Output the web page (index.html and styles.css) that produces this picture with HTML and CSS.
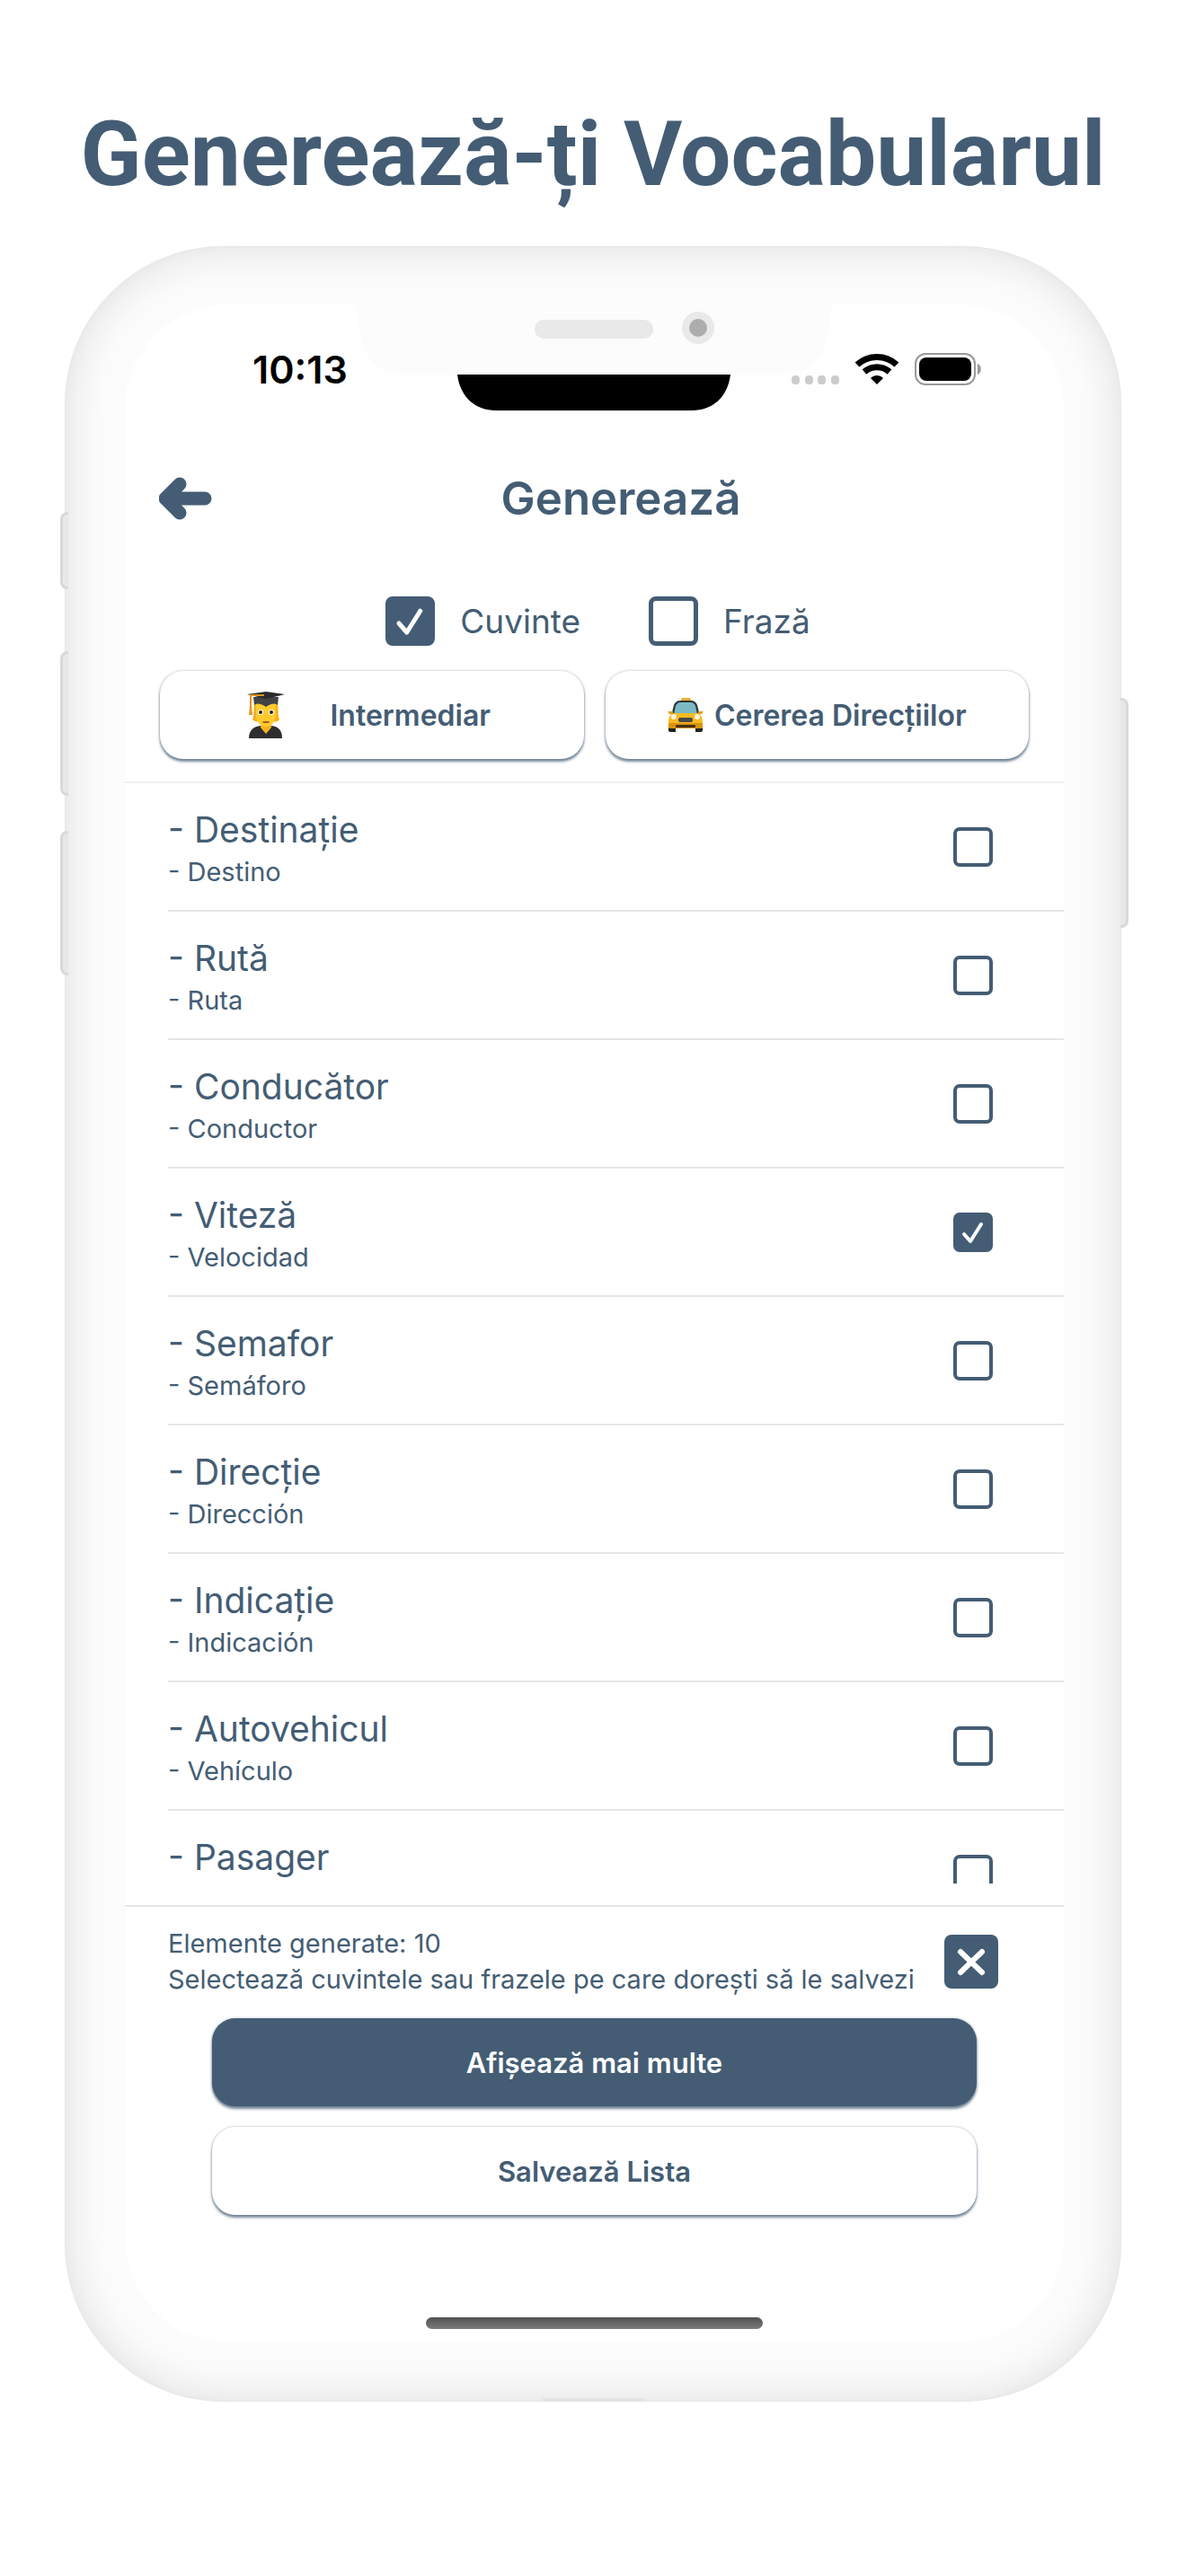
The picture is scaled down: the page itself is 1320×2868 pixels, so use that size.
FILE: index.html
```
<!DOCTYPE html>
<html lang="ro">
  <head>
    <meta charset="UTF-8" />
    <meta name="viewport" content="width=device-width, initial-scale=1.0" />
    <link rel="stylesheet" href="styles.css">
    <title>Generează-ți Vocabularul</title>
  </head>
  <body>
    <h1 class="headline">Generează-ți Vocabularul</h1>

    <div class="phone">
      <!-- side buttons -->
      <span class="key key-mute"></span>
      <span class="key key-up"></span>
      <span class="key key-down"></span>
      <span class="key key-power"></span>

      <main class="screen">
        <!-- notch, speaker and camera -->
        <svg class="notch" width="538" height="119" viewBox="0 0 538 119" aria-hidden="true">
          <path fill="#000" d="M117 78C120 103 137 118 160 118H378C401 118 418 103 421 78Z" />
          <path fill="#fcfcfc" d="M0 0C4 1 5 4 6 12C8 54 23 78 62 78H476C515 78 530 54 532 12C533 4 534 1 538 0Z" />
          <rect x="203" y="17" width="132" height="21" rx="10" fill="#e9e9e9" />
          <circle cx="385" cy="26" r="18" fill="#e9e9e9" />
          <circle cx="385" cy="26" r="10" fill="#adadad" />
        </svg>

        <div class="status">
          <span class="time">10:13</span>
          <svg width="212" height="38" viewBox="0 0 212 38" aria-hidden="true">
            <g fill="#ccc">
              <rect x="0" y="26" width="9" height="10" rx="4" />
              <rect x="15" y="26" width="9" height="10" rx="4" />
              <rect x="29" y="26" width="9" height="10" rx="4" />
              <rect x="44" y="26" width="9" height="10" rx="4" />
            </g>
            <g fill="none" stroke="#000" stroke-width="7">
              <path d="M73 14C85 2.500 105 2.500 117 14" />
              <path d="M81 22C89 15 101 15 109 22" />
            </g>
            <path d="M88 29C92 25 98 25 102 29L95 36Z" />
            <rect x="138" y="2" width="66" height="34" rx="11" fill="none" stroke="#999" stroke-width="2" />
            <rect x="142" y="6" width="58" height="26" rx="8" />
            <path fill="#999" d="M207 13C212 14 212 24 207 25Z" />
          </svg>
        </div>

        <header class="topbar">
          <button class="back" type="button" aria-label="Înapoi">
            <svg width="60" height="48" viewBox="0 0 60 48">
              <path fill="none" stroke="#445d74" stroke-width="15" stroke-linecap="round" stroke-linejoin="round" d="M23 8L7 24L23 40M9 24H51" />
              <path fill="#445d74" d="M7 24L23 8V40Z" />
            </svg>
          </button>
          <h2>Generează</h2>
        </header>

        <div class="kinds">
          <label><input type="checkbox" class="check big" checked /> Cuvinte</label>
          <label><input type="checkbox" class="check big" /> Frază</label>
        </div>

        <div class="filters">
          <button class="btn level" type="button">
            <svg width="42" height="52" viewBox="0 0 42 52" aria-hidden="true">
              <path fill="#f2b11e" d="M8 12H34C35 20 34 27 36 31C34 34 31 34 28 33H13C10 34 8 33 6 31C8 26 7 20 8 12Z" />
              <path fill="#2e2e30" d="M2 52C2 43 7 39 15 38H27C35 39 39 43 39 52Z" />
              <path fill="#f4b41f" d="M15 34H27V40L21 47L15 40Z" />
              <path fill="#ffcb2e" d="M10 14H32V26C32 34 26 39 21 39C16 39 10 34 10 26Z" />
              <path fill="#424245" d="M7 6H35L34 15C30 12 26 14 21 17C16 14 12 12 8 15Z" />
              <path fill="#2a2a2c" d="M0 3L21 0L42 3C36 5 28 6 21 8C14 6 6 5 0 3Z" />
              <path fill="none" stroke="#d99022" stroke-width="2" d="M19 4L4 4V18" />
              <path fill="#e39a2a" d="M3 15H5L6 26H2Z" />
              <circle cx="15" cy="23" r="3" fill="#fff" />
              <circle cx="27" cy="23" r="3" fill="#fff" />
              <circle cx="15" cy="23" r="2" fill="#2d2013" />
              <circle cx="27" cy="23" r="2" fill="#2d2013" />
              <ellipse cx="21" cy="34" rx="4" ry="1" fill="#a5542a" />
            </svg>
            Intermediar
          </button>
          <button class="btn topic" type="button">
            <svg width="40" height="38" viewBox="0 0 40 38" aria-hidden="true">
              <rect x="15" y="0" width="11" height="5" rx="2" fill="#e7ae35" />
              <path fill="#222" d="M1 31H9V38H3Q1 38 1 36ZM31 31H39V36Q39 38 37 38H31Z" />
              <path fill="#2f3638" d="M4 20L7 8Q9 3 14 3H26Q31 3 33 8L36 20Z" />
              <path fill="#7bbac4" d="M7 18L9 9Q11 5 14 5H26Q29 5 31 9L33 18Z" />
              <path fill="#f6bb22" d="M6 17H34Q39 20 39 26V32Q39 34 37 34H3Q1 34 1 32V26Q1 20 6 17Z" />
              <path fill="#d9930f" d="M1 28H39V32Q39 34 37 34H3Q1 34 1 32Z" />
              <path fill="#e3a21a" d="M0 15H6V18H2ZM40 15H34V18H38Z" />
              <circle cx="7" cy="21" r="3" fill="#fff3dc" />
              <circle cx="33" cy="21" r="3" fill="#fff3dc" />
              <rect x="12" y="22" width="16" height="5" rx="2" fill="#4a4a48" />
              <rect x="9" y="30" width="22" height="3" rx="1" fill="#44300c" />
            </svg>
            Cererea Direcțiilor
          </button>
        </div>

        <ul class="words">
          <li>
            <label for="w1"><b>- Destinație</b><small>- Destino</small></label>
            <input type="checkbox" class="check" id="w1" />
          </li>
          <li>
            <label for="w2"><b>- Rută</b><small>- Ruta</small></label>
            <input type="checkbox" class="check" id="w2" />
          </li>
          <li>
            <label for="w3"><b>- Conducător</b><small>- Conductor</small></label>
            <input type="checkbox" class="check" id="w3" />
          </li>
          <li>
            <label for="w4"><b>- Viteză</b><small>- Velocidad</small></label>
            <input type="checkbox" class="check" id="w4" checked />
          </li>
          <li>
            <label for="w5"><b>- Semafor</b><small>- Semáforo</small></label>
            <input type="checkbox" class="check" id="w5" />
          </li>
          <li>
            <label for="w6"><b>- Direcție</b><small>- Dirección</small></label>
            <input type="checkbox" class="check" id="w6" />
          </li>
          <li>
            <label for="w7"><b>- Indicație</b><small>- Indicación</small></label>
            <input type="checkbox" class="check" id="w7" />
          </li>
          <li>
            <label for="w8"><b>- Autovehicul</b><small>- Vehículo</small></label>
            <input type="checkbox" class="check" id="w8" />
          </li>
          <li>
            <label for="w9"><b>- Pasager</b></label>
            <input type="checkbox" class="check" id="w9" />
          </li>
        </ul>

        <footer class="actions">
          <div class="info">
            <p>Elemente generate: 10<br />Selectează cuvintele sau frazele pe care dorești să le salvezi</p>
            <button class="close" type="button" aria-label="Închide">
              <svg width="60" height="60" viewBox="0 0 60 60">
                <path stroke="#fff" stroke-width="6" stroke-linecap="round" d="M18 19L42 42M42 19L18 42" />
              </svg>
            </button>
          </div>
          <button class="btn dark" type="button">Afișează mai multe</button>
          <button class="btn" type="button">Salvează Lista</button>
        </footer>

        <div class="home"></div>
      </main>
      <span class="port"></span>
    </div>
  </body>
</html>
```
FILE: styles.css
```
* {
  box-sizing: border-box;
}
body {
  margin: 0;
  padding: 112px 5%;
  background: #fff;
  color: #445d74;
  font-family: Inter, "Liberation Sans", sans-serif;
}
button {
  font-family: inherit;
  color: inherit;
  cursor: pointer;
}

.headline {
  margin: 0 0 42px;
  font: bold 100px/120px Roboto, sans-serif;
  text-align: center;
  white-space: nowrap;
}

/* phone body */
.phone {
  position: relative;
  max-width: 1176px;
  margin: 0 auto;
  padding: 65px 64px 66px 67px;
  border-radius: 176px;
  background: #fcfcfc;
  box-shadow: inset 0 0 50px #dcdcdc, inset 0 0 3px #e4e4e4;
}
.key {
  position: absolute;
  left: -5px;
  width: 9px;
  border: 3px solid #d9d9d9;
  border-right: none;
  border-radius: 8px 0 0 8px;
  background: #e8e8e8;
}
.key-mute {
  top: 296px;
  height: 86px;
}
.key-up {
  top: 451px;
  height: 161px;
}
.key-down {
  top: 651px;
  height: 161px;
}
.key-power {
  top: 503px;
  left: auto;
  right: -8px;
  height: 256px;
  border: 3px solid #d9d9d9;
  border-left: none;
  border-radius: 0 8px 8px 0;
}
.port {
  position: absolute;
  left: 50%;
  bottom: 1px;
  width: 112px;
  height: 3px;
  margin-left: -56px;
  background: #e4e4e4;
}

.screen {
  position: relative;
  padding-bottom: 15px;
  border-radius: 116px;
  background: #fff;
}
.notch {
  position: absolute;
  top: 0;
  left: 50%;
  margin-left: -270px;
}
.status {
  display: flex;
  justify-content: space-between;
  align-items: center;
  padding: 50px 91px 0 142px;
}
.time {
  color: #000;
  font-size: 43px;
  font-weight: 600;
  line-height: 44px;
}

.topbar {
  display: grid;
  grid-template-columns: 60px 1fr;
  align-items: center;
  padding: 92px 39px 79px 38px;
}
.back {
  height: 48px;
  padding: 0;
  border: none;
  background: none;
}
.topbar h2 {
  margin: 0;
  font-size: 51px;
  font-weight: 600;
  line-height: 60px;
  text-align: center;
}

.kinds {
  display: flex;
  justify-content: center;
  gap: 76px;
  padding-left: 8px;
  font-size: 37px;
}
.kinds label {
  display: flex;
  align-items: center;
  gap: 28px;
}
.check {
  appearance: none;
  flex: none;
  width: 44px;
  height: 44px;
  margin: 0;
  border: 4px solid #445d74;
  border-radius: 7px;
}
.check.big {
  width: 55px;
  height: 55px;
  border-width: 5px;
  border-radius: 8px;
}
.check:checked {
  background: #445d74 url("data:image/svg+xml,%3Csvg xmlns='http://www.w3.org/2000/svg' viewBox='0 0 44 44'%3E%3Cpath fill='none' stroke='white' stroke-width='4' stroke-linecap='round' stroke-linejoin='round' d='M12 24L19 32L31 13'/%3E%3C/svg%3E") center / cover border-box;
}

.filters {
  display: grid;
  grid-template-columns: 1fr 1fr;
  gap: 24px;
  padding: 28px 39px 25px;
  border-bottom: 2px solid #f0f0f0;
}
.btn {
  display: flex;
  justify-content: center;
  align-items: center;
  width: 100%;
  height: 98px;
  padding: 0;
  border: none;
  border-radius: 26px;
  background: #fff;
  box-shadow: 0 3px 3px #445d74b8, 0 0 3px #445d7470;
  font-size: 31px;
  font-weight: 600;
  white-space: nowrap;
}
.btn.dark {
  background: #445d74;
  color: #fff;
}
.filters .btn {
  font-size: 32px;
}
.level {
  gap: 50px;
  padding-right: 6px;
}
.topic {
  gap: 12px;
}

.words {
  height: 1225px;
  margin: 0 0 24px;
  padding: 0 0 0 48px;
  overflow: hidden;
  list-style: none;
}
.words li {
  display: flex;
  justify-content: space-between;
  align-items: center;
  height: 143px;
  padding-right: 79px;
  border-bottom: 2px solid #e6e6e6;
}
.words label {
  height: 86px;
}
.words b {
  display: block;
  font-size: 39px;
  font-weight: 400;
  line-height: 48px;
}
.words small {
  display: block;
  font-size: 29px;
  line-height: 46px;
}

.actions {
  display: grid;
  gap: 23px;
  padding: 21px 97px 0;
  border-top: 2px solid #e6e6e6;
}
.info {
  display: flex;
  justify-content: space-between;
  align-items: center;
  margin: 0 -24px 0 -49px;
}
.info p {
  margin: 0;
  font-size: 29px;
  line-height: 40px;
  white-space: nowrap;
}
.close {
  width: 60px;
  height: 60px;
  padding: 0;
  border: none;
  border-radius: 8px;
  background: #445d74;
}

.home {
  width: 375px;
  height: 13px;
  margin: 114px auto 0;
  border-radius: 7px;
  background: linear-gradient(#505050, #7c7c7c);
}
```
